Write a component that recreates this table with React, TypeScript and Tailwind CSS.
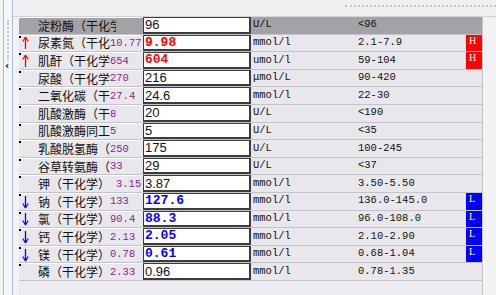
type Row = {
  name: string;
  num: string;
  val: string;
  unit: string;
  ref: string;
  flag?: "H" | "L";
  sel?: boolean;
  box?: string;
};

const rows: Row[] = [
  { name: "淀粉酶（干化学", num: "", val: "96", unit: "U/L", ref: "<96", sel: true, box: "w-[78px]" },
  { name: "尿素氮（干化学", num: "10.77", val: "9.98", unit: "mmol/l", ref: "2.1-7.9", flag: "H" },
  { name: "肌酐（干化学", num: "654", val: "604", unit: "umol/l", ref: "59-104", flag: "H" },
  { name: "尿酸（干化学", num: "270", val: "216", unit: "μmol/L", ref: "90-420" },
  { name: "二氧化碳（干", num: "27.4", val: "24.6", unit: "mmol/l", ref: "22-30" },
  { name: "肌酸激酶（干", num: "8", val: "20", unit: "U/L", ref: "<190" },
  { name: "肌酸激酶同工", num: "5", val: "5", unit: "U/L", ref: "<35" },
  { name: "乳酸脱氢酶（", num: "250", val: "175", unit: "U/L", ref: "100-245" },
  { name: "谷草转氨酶（", num: "33", val: "29", unit: "U/L", ref: "<37" },
  { name: "钾（干化学）", num: "3.15", val: "3.87", unit: "mmol/l", ref: "3.50-5.50", box: "w-[78px]" },
  { name: "钠（干化学）", num: "133", val: "127.6", unit: "mmol/l", ref: "136.0-145.0", flag: "L" },
  { name: "氯（干化学）", num: "90.4", val: "88.3", unit: "mmol/l", ref: "96.0-108.0", flag: "L" },
  { name: "钙（干化学）", num: "2.13", val: "2.05", unit: "mmol/l", ref: "2.10-2.90", flag: "L" },
  { name: "镁（干化学）", num: "0.78", val: "0.61", unit: "mmol/l", ref: "0.68-1.04", flag: "L" },
  { name: "磷（干化学）", num: "2.33", val: "0.96", unit: "mmol/l", ref: "0.78-1.35" },
];

const cjk = "font-['Noto_Sans_CJK_SC','Noto_Sans',sans-serif]";
const mono = "font-['Liberation_Mono','DejaVu_Sans_Mono',monospace]";

function Arrow({ up }: { up: boolean }) {
  const c = up ? "#ff0000" : "#0000ff";
  return (
    <svg width="7" height="14" viewBox="0 0 7 14">
      {up ? (
        <>
          <path d="M3.5 1 L0.8 5.5 M3.5 1 L6.2 5.5" stroke={c} strokeWidth="1.2" fill="none" />
          <path d="M3.5 1.5 V13" stroke={c} strokeWidth="1.3" />
        </>
      ) : (
        <>
          <path d="M3.5 1 V12.5" stroke={c} strokeWidth="1.3" />
          <path d="M3.5 13 L0.8 8.5 M3.5 13 L6.2 8.5" stroke={c} strokeWidth="1.2" fill="none" />
        </>
      )}
    </svg>
  );
}

function DataRow({ r, first }: { r: Row; first: boolean }) {
  const bg = r.sel ? "bg-[#a3a3a7]" : "bg-[#e8e8ec]";
  const valColor =
    r.flag === "H"
      ? `text-[#ff0000] font-bold ${mono} text-[13px]`
      : r.flag === "L"
        ? `text-[#0000ff] font-bold ${mono} text-[13px]`
        : "text-[#111] font-['Liberation_Sans',Arial,sans-serif] text-[13px]";
  return (
    <div className={`relative flex h-[17.6px] ${bg} border-b border-[#c4c4c8]`}>
      {!first && <div className="absolute left-0 top-[1px] h-[2px] w-[2px] bg-black" />}
      <div className="flex w-[124px] items-center overflow-hidden border-t border-white pl-[3px]">
        <div className="w-[16px] shrink-0">{r.flag && <Arrow up={r.flag === "H"} />}</div>
        <div className={`${r.box ?? "w-[72px]"} shrink-0 overflow-hidden whitespace-nowrap text-[12px] leading-none text-[#111] ${cjk}`}>
          {r.name}
        </div>
        <span className={`${mono} whitespace-nowrap text-[10.5px] leading-none text-[#8b1c8b]`}>{r.num}</span>
      </div>
      <div className="flex w-[108px] items-center overflow-hidden border border-b-2 border-r-2 border-[#3c3c3c] bg-white pl-[1px]">
        <span className={`${valColor} leading-none`}>{r.val}</span>
      </div>
      <div className={`flex w-[105px] items-center pl-[2px] ${mono} text-[10.5px] text-[#111]`}>{r.unit}</div>
      <div className={`flex w-[110px] items-center pl-[2px] ${mono} text-[10.5px] text-[#111]`}>{r.ref}</div>
      <div
        className={`flex w-[16px] items-start pl-[3px] pt-[1px] font-['Liberation_Serif',serif] text-[10px] leading-none text-white ${
          r.flag === "H" ? "bg-[#ff0000]" : r.flag === "L" ? "bg-[#0000ff]" : ""
        }`}
      >
        {r.flag}
      </div>
    </div>
  );
}

export default function App() {
  return (
    <div className="flex h-[295px] w-[496px] overflow-hidden bg-[#ececf0]">
      {/* left splitter strip */}
      <div className="flex w-[13px] flex-col border-l-[3px] border-[#f2f4f8] bg-[#f4f6fa]">
        <div className="h-full border-l border-r border-[#a9bdda]">
          <div className="ml-[3px] mt-[20px] h-[40px] w-[2px] border-l-2 border-dotted border-[#c0c4cc]" />
          <div className="mt-[1px] pl-[1px] font-['DejaVu_Sans',sans-serif] text-[10px] font-bold leading-none text-black">‹</div>
        </div>
      </div>

      <div className="flex flex-1 flex-col">
        <div className="flex h-[17px] justify-end border-b border-[#d4d4d8] bg-[#f0f0f2]">
          <div className="mt-[5px] h-[2px] w-[151px] border-t-2 border-dotted border-[#c4c4c8]" />
        </div>
        <div className="flex flex-1">
          <div className="w-[6px] bg-[#f2f2f4]" />
          <div className="flex w-[463px] flex-col">
            {rows.map((r, i) => (
              <DataRow key={i} r={r} first={i === 0} />
            ))}
          </div>
          <div className="flex-1 border-l border-[#c8c8cc] bg-[#f2f2f4]" />
        </div>
      </div>
    </div>
  );
}
